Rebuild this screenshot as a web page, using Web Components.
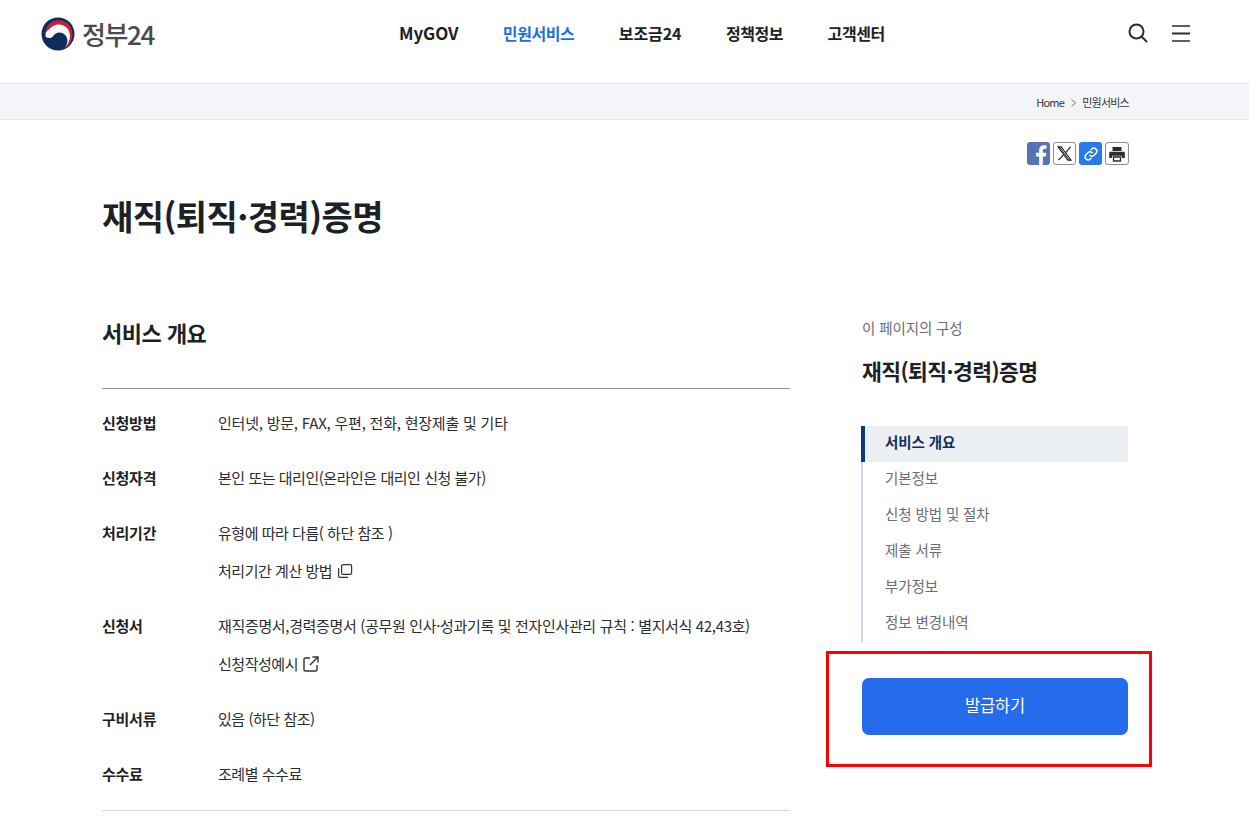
<!DOCTYPE html>
<html lang="ko"><head><meta charset="utf-8"><title>재직(퇴직·경력)증명</title>
<style>
html,body{margin:0;padding:0;background:#fff}
body{height:816px;overflow:hidden;font-family:"Noto Sans CJK KR","Noto Sans",sans-serif;color:#1e2124}
</style></head><body>
<gov-header></gov-header>
<gov-crumb></gov-crumb>
<gov-page>
  <gov-share slot="share"></gov-share>
  <gov-overview slot="main"></gov-overview>
  <gov-side slot="side"></gov-side>
</gov-page>
<script>
function def(name,html){customElements.define(name,class extends HTMLElement{
  constructor(){super();this.attachShadow({mode:'open'}).innerHTML=html;}
});}
def('gov-header',`<style>
:host{display:flex;box-sizing:border-box;height:84px;border-bottom:1px solid #e6e8ec;background:#fff;padding:0 59px 0 41px;align-items:flex-start}
.logo{display:flex;align-items:center;gap:7px;height:34px;margin-top:17px;width:358px;flex:none}
.logo span{font:500 26px/34px "Noto Sans CJK KR",sans-serif;color:#4a4a4d;letter-spacing:-1.4px}
nav{display:flex;gap:44.500px;margin-top:22px}
nav a{font:700 16px/22px "Noto Sans CJK KR",sans-serif;color:#1e2124;letter-spacing:-.45px}
nav a.en{font-size:17px;letter-spacing:-.1px}
nav a.d{letter-spacing:-.05px}
nav a.on{color:#1f6fe0}
.ic{display:flex;gap:24px;margin:23px 0 0 auto;align-items:center}
</style>
<div class="logo"><svg width="34" height="34" viewBox="0 0 34 34">
<circle cx="17" cy="17" r="16.500" fill="#0f2d5c"/>
<path d="M4.500 19C4.500 10 10 5 17 5 25 5 30 11 30 18 30 24 27 28 24 31 27 26 27 22 25 19 22 15 17 14.500 14 17 12 19 11 21 8.500 21 6 21 4.800 20 4.500 19Z" fill="#fff"/>
<path d="M4.500 16C5 9 10 3.200 17.500 3.200 26 3.200 31.500 10 31.500 17.500 31.500 23 28 29 24 31.500 27 27 29 23 29 19 29 12.500 24 7.500 18 7.500 13 7.500 10.500 10 8.500 12 7 13.500 5 14.500 4.500 16Z" fill="#c8203a"/>
</svg><span>정부24</span></div>
<nav><a class="en">MyGOV</a><a class="on">민원서비스</a><a class="d">보조금24</a><a>정책정보</a><a>고객센터</a></nav>
<div class="ic">
<svg width="20" height="20" viewBox="0 0 20 20" fill="none" stroke="#2b2d31"><circle cx="8.500" cy="8.500" r="7" stroke-width="2"/><path d="M13.500 13.500 18.500 18.500" stroke-width="2" stroke-linecap="round"/></svg>
<svg width="18" height="19" viewBox="0 0 18 19" fill="none" stroke="#2b2d31"><path d="M0 2h18" stroke-width="1.500"/><path d="M0 9.500h18" stroke-width="2"/><path d="M0 17h18" stroke-width="1.500"/></svg>
</div>`);
def('gov-crumb',`<style>
:host{display:flex;box-sizing:border-box;height:36px;background:#f4f5f9;border-bottom:1px solid #e6e8ec;justify-content:flex-end;align-items:center;padding:0 120px 0 0;font:400 11px/16px "Noto Sans CJK KR",sans-serif;color:#33363d;letter-spacing:-.75px}
svg{margin:3px 6px 0 7px}
</style><span>Home</span><svg width="5" height="8" viewBox="0 0 5 8" fill="none" stroke="#777"><path d="M.5.5 4.500 4 .5 7.500"/></svg><span>민원서비스</span>`);
def('gov-page',`<style>
:host{display:block;padding:0 120px 0 102px}
.share{display:flex;justify-content:flex-end;margin-top:22px;height:24px}
h1{margin:0;font:700 34px/48px "Noto Sans CJK KR",sans-serif;letter-spacing:-.55px;color:#1e2124;margin-top:26px}
.cols{display:flex;margin-top:79px}
.m{width:688px;flex:none}
.s{margin-left:72px;flex:1;min-width:0}
</style>
<div class="share"><slot name="share"></slot></div>
<h1>재직(퇴직·경력)증명</h1>
<div class="cols"><div class="m"><slot name="main"></slot></div><div class="s"><slot name="side"></slot></div></div>`);
def('gov-share',`<style>
:host{display:flex;gap:3px;height:23px}
.b{box-sizing:border-box;width:23px;height:23px;border-radius:3px;display:flex;align-items:center;justify-content:center;overflow:hidden}
.f{background:#5673b4}
.x,.p{border:1px solid #8b8e94;background:#fff}
.p{width:24px}
.l{background:#2a79e8}
</style>
<div class="b f"><svg width="23" height="23" viewBox="0 0 24 24"><path d="M16.500 24V15h3l.6-3.800h-3.600V8.800c0-1.100.4-1.800 1.900-1.800h1.900V3.600C19.900 3.500 18.800 3.400 17.500 3.400c-2.900 0-4.800 1.700-4.800 4.900v2.900H9.500V15h3.200v9Z" fill="#fff"/></svg></div>
<div class="b x"><svg width="17" height="17" viewBox="0 0 18 18" fill="none" stroke="#222"><path d="M2 2h3.500L16 16h-3.500Z" stroke-width="1.100"/><path d="M3.500 2 14 16" stroke-width="1"/><path d="M15.500 2 10 8.300M8 10.500 2.500 16" stroke-width="1.300"/></svg></div>
<div class="b l"><svg width="16" height="16" viewBox="0 0 16 16" fill="none" stroke="#fff" stroke-width="1.500" stroke-linecap="round"><path d="M6.800 9.200a3 3 0 0 0 4.200 0l2.200-2.200A3 3 0 0 0 9 2.800l-1 1"/><path d="M9.200 6.800a3 3 0 0 0-4.200 0L2.800 9A3 3 0 0 0 7 13.200l1-1"/></svg></div>
<div class="b p"><svg width="18" height="18" viewBox="0 0 18 18" fill="#2b2d31"><path d="M4.500 2h9v4h-9Z" /><path d="M2.500 6.800h13c.8 0 1.300.5 1.300 1.300v5h-3v-2.400H4.200v2.400h-3v-5c0-.8.5-1.300 1.300-1.300Z"/><path d="M5.500 12h7v4h-7Z" fill="#fff" stroke="#2b2d31" stroke-width="1.300"/></svg></div>`);
const ROWS=[
['신청방법','<p class="w">인터넷, 방문, FAX, 우편, 전화, 현장제출 및 기타</p>'],
['신청자격','<p>본인 또는 대리인(온라인은 대리인 신청 불가)</p>'],
['처리기간','<p>유형에 따라 다름( 하단 참조 )</p><p class="l">처리기간 계산 방법 <svg width="16" height="16" viewBox="0 0 16 16" fill="none" stroke="#333" stroke-width="1.200"><rect x="4.600" y="1.600" width="10" height="9.800" rx="1.500"/><path d="M1.600 5v8.200c0 .7.500 1.200 1.200 1.200h8.200"/></svg></p>'],
['신청서','<p class="m">재직증명서,경력증명서 (공무원 인사·성과기록 및 전자인사관리 규칙 : 별지서식 42,43호)</p><p class="l">신청작성예시 <svg width="16" height="16" viewBox="0 0 16 16" fill="none" stroke="#333" stroke-width="1.400"><path d="M7 2H2.500C1.700 2 1 2.700 1 3.500v10C1 14.300 1.700 15 2.500 15h10c.8 0 1.500-.7 1.500-1.500V9"/><path d="M9.500 1H15v5.500M15 1 7 9"/></svg></p>'],
['구비서류','<p>있음 (하단 참조)</p>'],
['수수료','<p>조례별 수수료</p>']];
def('gov-overview',`<style>
:host{display:block}
h2{margin:0;font:700 22px/32px "Noto Sans CJK KR",sans-serif;letter-spacing:-.5px;color:#1e2124;height:65px;margin-top:-3px;box-sizing:border-box}
.t{border-top:1px solid #8e9196;border-bottom:1px solid #d4d6da;padding:22px 0 24px;display:flex;flex-direction:column;gap:31px;margin-top:7px}
.r{display:flex}
.k{width:116px;flex:none;font:700 15px/24px "Noto Sans CJK KR",sans-serif;letter-spacing:-.25px}
.v{flex:1;font:400 15px/24px "Noto Sans CJK KR",sans-serif;letter-spacing:-.47px;color:#2b2d31}
p{margin:0;display:flex;align-items:center;gap:5px;white-space:nowrap}
p.l{margin-top:14px}
p.w{letter-spacing:-.22px}
p.m{letter-spacing:-.34px}
</style><h2>서비스 개요</h2><div class="t">${ROWS.map(r=>`<div class="r"><div class="k">${r[0]}</div><div class="v">${r[1]}</div></div>`).join('')}</div>`);
def('gov-side',`<style>
:host{display:block}
.c{font:400 14.500px/20px "Noto Sans CJK KR",sans-serif;color:#6a6d73;letter-spacing:-.1px;margin-top:-1px}
h3{margin:18px 0 0;font:700 21.500px/30px "Noto Sans CJK KR",sans-serif;letter-spacing:-.55px;color:#1e2124}
ul{list-style:none;margin:40px 0 0 -1px;padding:0;border-left:2px solid #cdd9e8;width:265px}
li{height:36px;box-sizing:border-box;padding-left:22px;font:400 14.500px/32px "Noto Sans CJK KR",sans-serif;color:#6a6d73;letter-spacing:-.1px}
li.on{margin-left:-2px;border-left:4px solid #0b3a7e;padding-left:20px;background:#eceff3;font-weight:700;color:#0f2f5f}
.box{box-sizing:border-box;border:3px solid #f00;width:326px;height:116px;margin:9px 0 0 -36px;padding:24px 20px 0 33px}
button{display:block;width:266px;height:57px;border:0;border-radius:7px;background:#256bec;color:#fff;font:400 16.500px/24px "Noto Sans CJK KR",sans-serif;letter-spacing:-.2px;padding:0 0 3px}
</style><div class="c">이 페이지의 구성</div><h3>재직(퇴직·경력)증명</h3>
<ul><li class="on">서비스 개요</li><li>기본정보</li><li>신청 방법 및 절차</li><li>제출 서류</li><li>부가정보</li><li>정보 변경내역</li></ul>
<div class="box"><button>발급하기</button></div>`);
</script></body></html>
